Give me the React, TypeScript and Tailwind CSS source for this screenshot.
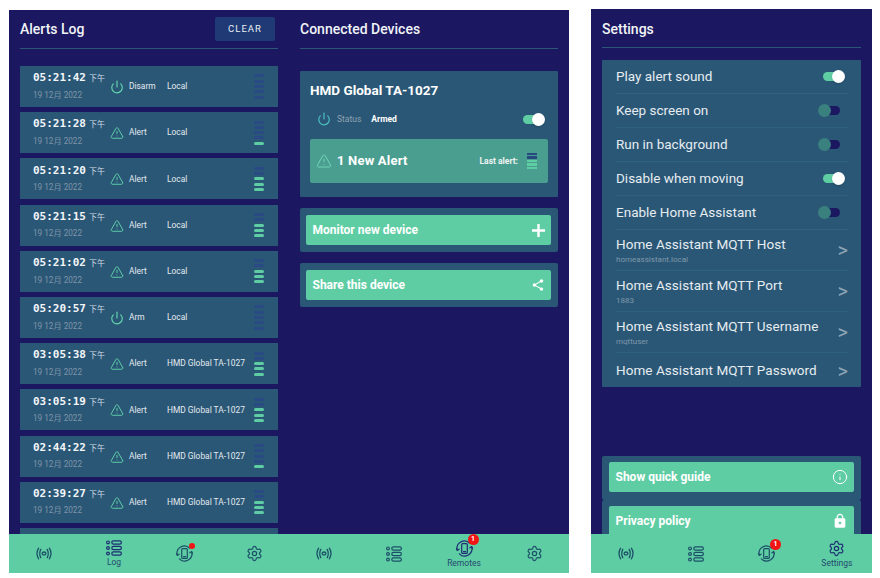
import React from 'react';
import { Power, TriangleAlert, Info, Settings as Gear } from 'lucide-react';
import { MdLock, MdShare } from 'react-icons/md';

interface LogEntry {
  time: string;
  action: string;
  source: string;
  level: number;
}

const entries: LogEntry[] = [
  { time: '05:21:42', action: 'Disarm', source: 'Local', level: 0 },
  { time: '05:21:28', action: 'Alert', source: 'Local', level: 1 },
  { time: '05:21:20', action: 'Alert', source: 'Local', level: 3 },
  { time: '05:21:15', action: 'Alert', source: 'Local', level: 3 },
  { time: '05:21:02', action: 'Alert', source: 'Local', level: 3 },
  { time: '05:20:57', action: 'Arm', source: 'Local', level: 0 },
  { time: '03:05:38', action: 'Alert', source: 'HMD Global TA-1027', level: 3 },
  { time: '03:05:19', action: 'Alert', source: 'HMD Global TA-1027', level: 3 },
  { time: '02:44:22', action: 'Alert', source: 'HMD Global TA-1027', level: 1 },
  { time: '02:39:27', action: 'Alert', source: 'HMD Global TA-1027', level: 3 },
];

const BroadcastIcon = () => (
  <svg width="16" height="13" viewBox="0 0 16 13" fill="none" stroke="currentColor" strokeWidth="1.3" strokeLinecap="round">
    <path d="M2.6 1.2C.8 4.2.8 8.8 2.6 11.8" />
    <path d="M4.8 2.4C3.5 4.8 3.5 8.2 4.8 10.6" />
    <path d="M13.4 1.2C15.2 4.2 15.2 8.8 13.4 11.8" />
    <path d="M11.2 2.4C12.5 4.8 12.5 8.2 11.2 10.6" />
    <ellipse cx="8" cy="6.5" rx="1.9" ry="1.5" />
  </svg>
);

const ListIcon = () => (
  <svg width="16" height="16" viewBox="0 0 16 16" fill="none" stroke="currentColor" strokeWidth="1.2">
    <circle cx="2" cy="2.4" r="1.4" />
    <circle cx="2" cy="8" r="1.4" />
    <circle cx="2" cy="13.6" r="1.4" />
    <rect x="5.8" y="0.8" width="9.6" height="3.4" rx="1.7" />
    <rect x="5.8" y="6.3" width="9.6" height="3.4" rx="1.7" />
    <rect x="5.8" y="11.8" width="9.6" height="3.4" rx="1.7" />
  </svg>
);

const SyncPhoneIcon = () => (
  <svg width="17" height="17" viewBox="0 0 17 17" fill="none" stroke="currentColor" strokeWidth="1.2" strokeLinecap="round" strokeLinejoin="round">
    <rect x="5.7" y="3.6" width="5.6" height="9.8" rx="1" />
    <path d="M7.4 11.6h2.2" />
    <path d="M1.4 10.4A7.3 7.3 0 0 1 13.6 3.2" />
    <path d="M15.6 6.6A7.3 7.3 0 0 1 3.4 13.8" />
    <path d="M.4 8.4l1 2.1 1.8-1.4" />
    <path d="M16.6 8.6l-1-2.1-1.8 1.4" />
  </svg>
);

const PlusIcon = () => (
  <svg width="13" height="13" viewBox="0 0 13 13" fill="none" stroke="currentColor" strokeWidth="2.4">
    <path d="M6.5 0v13M0 6.5h13" />
  </svg>
);

const Toggle = ({ on }: { on: boolean }) =>
  on ? (
    <span className="relative block w-[22px] h-[13px]">
      <span className="absolute left-0 top-[2px] w-[20px] h-[9px] rounded-full bg-[#5fcda4]" />
      <span className="absolute right-0 top-0 w-[13px] h-[13px] rounded-full bg-white shadow" />
    </span>
  ) : (
    <span className="relative block w-[22px] h-[13px]">
      <span className="absolute right-0 top-[2px] w-[18px] h-[9px] rounded-full bg-[#1b1760]" />
      <span className="absolute left-0 top-0 w-[13px] h-[13px] rounded-full bg-[#3a807f]" />
    </span>
  );

const LevelBars = ({ level }: { level: number }) => (
  <div className="flex flex-col gap-[2.3px] w-[10px]">
    {[4, 3, 2, 1, 0].map(i => (
      <span key={i} className={`block h-[3px] rounded-[1.5px] ${i < level ? 'bg-[#5fcda4]' : 'bg-[#2a4a85]'}`} />
    ))}
  </div>
);

const LogRow = ({ entry }: { entry: LogEntry }) => (
  <div className="flex items-center shrink-0 h-[41px] mb-[5.2px] bg-[#2a5776] text-white">
    <div className="w-[90px] pl-[13px] pb-[2px] shrink-0">
      <div className="flex items-baseline whitespace-nowrap">
        <span className="font-['DejaVu_Sans_Mono'] font-bold text-[11px] text-[#f2f5f8]">{entry.time}</span>
        <span className="ml-[3px] text-[8px] font-['Noto_Sans_CJK_SC'] text-[#d5dde3]">下午</span>
      </div>
      <div className="mt-[3px] text-[8.2px] leading-[11px] text-[#7f95a8] font-['Roboto','Noto_Sans_CJK_SC',sans-serif]">19 12月 2022</div>
    </div>
    {entry.action === 'Alert' ? (
      <TriangleAlert size={14} strokeWidth={1.6} className="text-[#62d4ac] shrink-0 mt-[1px]" />
    ) : (
      <Power size={14} strokeWidth={2} className="text-[#62d4ac] shrink-0 mt-[1px]" />
    )}
    <span className="ml-[5px] w-[38px] shrink-0 text-[8.4px] text-[#e4eaef]">{entry.action}</span>
    <span className="flex-1 text-[8.4px] text-[#e4eaef] whitespace-nowrap">{entry.source}</span>
    <div className="mr-[14px]">
      <LevelBars level={entry.level} />
    </div>
  </div>
);

const ActionCard = ({ label, icon, className }: { label: string; icon: React.ReactNode; className: string }) => (
  <div className={`bg-[#2a5776] rounded-[2px] pr-[7px] ${className}`}>
    <div className="flex items-center justify-between h-[30px] pl-[6.5px] pr-[6px] rounded-[2px] bg-[#5fcda4] text-white">
      <span className="text-[12px] font-bold">{label}</span>
      {icon}
    </div>
  </div>
);

const NavItem = ({ icon, label, badge }: { icon: React.ReactNode; label?: string; badge?: 'dot' | 'count' }) => (
  <div className="flex-1 flex flex-col items-center justify-center">
    <div className={`relative flex items-center justify-center ${label ? 'text-[#1d2f72]' : 'text-[#1c5068]'}`}>
      {icon}
      {badge === 'dot' && <span className="absolute -top-[2px] -right-[2px] w-[6px] h-[6px] rounded-full bg-[#f01414]" />}
      {badge === 'count' && (
        <span className="absolute -top-[6px] -right-[6px] w-[11px] h-[11px] rounded-full bg-[#f01414] text-white text-[7px] font-bold leading-[11px] text-center">1</span>
      )}
    </div>
    {label && <span className="mt-[1px] text-[8.5px] leading-[10px] text-[#1f4a6e]">{label}</span>}
  </div>
);

const BottomNav = ({ active, badge }: { active: string; badge: 'dot' | 'count' }) => (
  <div className="relative flex shrink-0 h-[39px] bg-[#5fcda4]">
    <NavItem icon={<BroadcastIcon />} />
    <NavItem icon={<ListIcon />} label={active === 'log' ? 'Log' : undefined} />
    <NavItem icon={<SyncPhoneIcon />} label={active === 'remotes' ? 'Remotes' : undefined} badge={badge} />
    <NavItem icon={<Gear size={17} strokeWidth={1.7} />} label={active === 'settings' ? 'Settings' : undefined} />
  </div>
);

const Header = ({ title, children, titleClass }: { title: string; children?: React.ReactNode; titleClass: string }) => (
  <div className="flex items-center justify-between shrink-0 h-[39px] border-b border-[#2a5776]">
    <span className={`text-[14px] font-medium text-[#f0f4f7] ${titleClass}`}>{title}</span>
    {children}
  </div>
);

const SwitchRow = ({ label, on }: { label: string; on: boolean }) => (
  <div className="flex items-center justify-between h-[34px] border-b border-[#2f6280] pr-[3px]">
    <span className="text-[13.5px] text-[#e6ecf0] -mt-[1px]">{label}</span>
    <div className={on ? '' : 'mr-[5px]'}>
      <Toggle on={on} />
    </div>
  </div>
);

const LinkRow = ({ label, value, last }: { label: string; value?: string; last?: boolean }) => (
  <div className={`flex items-center justify-between ${last ? 'h-[35px]' : 'h-[41px] border-b border-[#2f6280]'}`}>
    <div>
      <div className="text-[13.5px] tracking-[0.05px] leading-[17px] text-[#e6ecf0] whitespace-nowrap">{label}</div>
      {value && <div className="text-[8px] leading-[10px] mt-[2px] text-[#7f98aa]">{value}</div>}
    </div>
    <span className="text-[20px] text-[#8fa5b5] leading-none">&gt;</span>
  </div>
);

export default function App() {
  return (
    <div className="flex w-[880px] h-[578px] bg-white pl-[9px] font-['Roboto',sans-serif]">
      <div className="flex w-[560px] h-[563px] mt-[10px] bg-[#1b1760]">
        <section className="flex flex-col w-[280px]">
          <div className="flex flex-col flex-1 min-h-0 overflow-hidden pl-[11px] pr-[11px]">
            <Header title="Alerts Log" titleClass="pt-[1px]">
              <button className="mr-[3px] w-[60px] h-[24px] rounded-[2px] bg-[#1f3a75] text-[#e8eef2] text-[9.5px] tracking-[1px]">CLEAR</button>
            </Header>
            <div className="flex flex-col mt-[17px]">
              {entries.map((entry, i) => (
                <LogRow key={i} entry={entry} />
              ))}
              <div className="shrink-0 h-[41px] bg-[#2a5776]" />
            </div>
          </div>
          <BottomNav active="log" badge="dot" />
        </section>

        <section className="flex flex-col w-[280px]">
          <div className="flex-1 min-h-0 pl-[11px] pr-[11px]">
            <Header title="Connected Devices" titleClass="pt-[1px]" />
            <div className="mt-[22px] h-[126px] bg-[#2a5776] rounded-[1px] px-[10px] pt-[9px]">
              <div className="text-[13.5px] font-bold leading-[20px] text-white">HMD Global TA-1027</div>
              <div className="flex items-center mt-[11px] h-[16px] pl-[7px] pr-[3px]">
                <Power size={14} strokeWidth={2} className="text-[#4cc0c0]" />
                <span className="ml-[6px] text-[8.5px] text-[#8ea3b3]">Status</span>
                <span className="ml-[10px] flex-1 text-[8.5px] font-bold text-white">Armed</span>
                <Toggle on />
              </div>
              <div className="flex items-center h-[44px] mt-[12px] px-[6px] rounded-[2px] bg-[#4a9e90]">
                <TriangleAlert size={16} strokeWidth={1.4} className="text-[#73d6b8]" />
                <span className="ml-[5px] flex-1 text-[13px] font-bold tracking-[0.2px] text-white">1 New Alert</span>
                <span className="mr-[9px] text-[8.5px] font-bold text-[#eef4f2]">Last alert:</span>
                <div className="flex flex-col gap-[1.2px] w-[10px] mr-[5px]">
                  {[0, 1, 2, 3, 4].map(i => (
                    <span key={i} className={`block h-[2.4px] ${i < 2 ? 'bg-[#264a80]' : 'bg-[#5fcda4]'}`} />
                  ))}
                </div>
              </div>
            </div>
            <ActionCard className="mt-[11px] pl-[6px] py-[7px]" label="Monitor new device" icon={<PlusIcon />} />
            <ActionCard className="mt-[11px] pl-[6px] py-[7px]" label="Share this device" icon={<MdShare size={14} />} />
          </div>
          <BottomNav active="remotes" badge="count" />
        </section>
      </div>

      <section className="flex flex-col w-[281px] h-[564px] mt-[9px] ml-[22px] bg-[#1b1760]">
        <div className="flex-1 min-h-0 overflow-hidden px-[11px]">
          <Header title="Settings" titleClass="pt-[2px]" />
          <div className="mt-[12px] h-[327px] bg-[#2a5776] rounded-[1px] pl-[14px] pr-[13px]">
            <SwitchRow label="Play alert sound" on />
            <SwitchRow label="Keep screen on" on={false} />
            <SwitchRow label="Run in background" on={false} />
            <SwitchRow label="Disable when moving" on />
            <SwitchRow label="Enable Home Assistant" on={false} />
            <LinkRow label="Home Assistant MQTT Host" value="homeassistant.local" />
            <LinkRow label="Home Assistant MQTT Port" value="1883" />
            <LinkRow label="Home Assistant MQTT Username" value="mqttuser" />
            <LinkRow label="Home Assistant MQTT Password" last />
          </div>
          <ActionCard className="mt-[69px] pl-[7px] pt-[6px] pb-[8px]" label="Show quick guide" icon={<Info size={16} strokeWidth={1.5} />} />
          <ActionCard className="pl-[7px] pt-[6px] pb-[8px]" label="Privacy policy" icon={<MdLock size={16} />} />
        </div>
        <BottomNav active="settings" badge="count" />
      </section>
    </div>
  );
}
